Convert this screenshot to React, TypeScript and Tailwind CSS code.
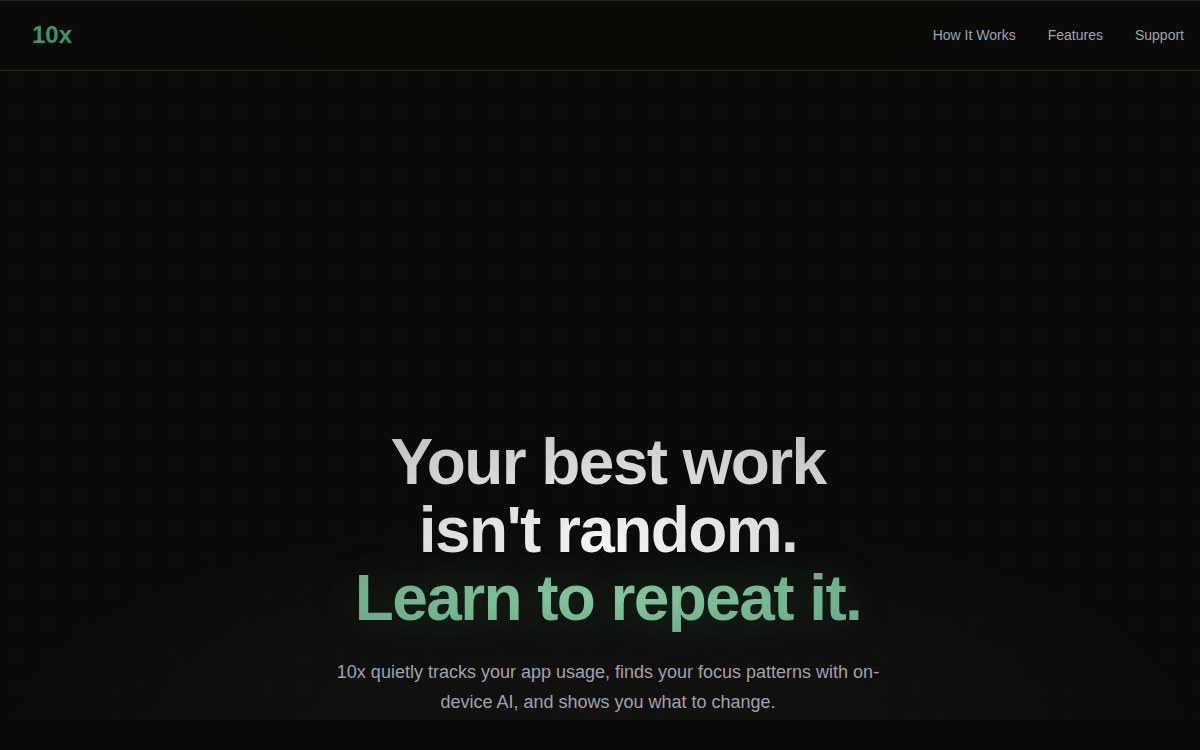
const navLinks = [
  { label: "How It Works", href: "#how-it-works" },
  { label: "Features", href: "#features" },
  { label: "Support", href: "#support" },
];

function Header() {
  return (
    <header className="flex items-center justify-between h-[71px] pl-8 pr-4 pb-0.5 border-y border-t-[#22231f] border-b-[#27271d] bg-[#0b0b09] bg-[radial-gradient(ellipse_400px_90px_at_50%_0%,#0b0c07_0%,#0b0b09_100%)]">
      <a href="#" className="text-2xl leading-8 font-bold text-[#3f9470]">
        10x
      </a>
      <nav className="flex gap-8 text-sm text-[#a1a1b0]">
        {navLinks.map((link) => (
          <a key={link.href} href={link.href}>
            {link.label}
          </a>
        ))}
      </nav>
    </header>
  );
}

function Hero() {
  return (
    <section className="bg-[radial-gradient(ellipse_50%_32%_at_50%_100%,#11110f_0%,#0f0f0d_55%,#0b0b09_100%)]">
      {/* dot grid */}
      <div className="bg-[radial-gradient(circle,rgba(255,255,255,0.04)_1px,transparent_1px)] bg-[length:32px_32px] bg-[position:0_25px] pt-[357px] pb-[3px] pl-4 text-center">
        <h1 className="text-[64px] leading-[68px] font-bold tracking-tight">
          <span className="block w-fit mx-auto px-2 text-transparent bg-clip-text bg-[radial-gradient(ellipse_400px_150px_at_50%_120px,#f4f4f4_0%,#d8d8d6_55%,#bcbcbc_100%)]">
            Your best work
            <br />
            isn't random.
          </span>
          <span className="block w-fit mx-auto px-2 text-transparent bg-clip-text bg-[radial-gradient(ellipse_at_center,#84c5a1_0%,#6dad8b_75%)] drop-shadow-[0_0_20px_rgba(63,148,112,0.22)]">
            Learn to repeat it.
          </span>
        </h1>
        <p className="mt-[25px] mx-auto max-w-[576px] text-lg leading-[30px] text-[#a1a1b0]">
          10x quietly tracks your app usage, finds your focus patterns with on-device AI, and shows you what to change.
        </p>
      </div>
    </section>
  );
}

export default function App() {
  return (
    <div className="min-h-screen bg-[#0b0b09] font-['Liberation_Sans',Arial,sans-serif]">
      <Header />
      <Hero />
    </div>
  );
}
